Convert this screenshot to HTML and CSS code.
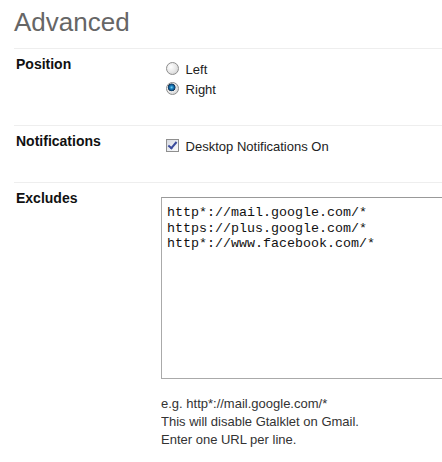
FILE: index.html
```html
<!DOCTYPE html>
<html lang="en">
<head>
<meta charset="UTF-8">
<title>Advanced</title>
<link rel="stylesheet" href="styles.css">
</head>
<body>

<div class="page">
  <h1 class="title">Advanced</h1>

  <div class="row">
    <div class="row-label">Position</div>
    <div class="row-content">
      <label class="option"><input type="radio" name="position" class="radio"> Left</label>
      <label class="option"><input type="radio" name="position" class="radio" checked> Right</label>
    </div>
  </div>

  <div class="row">
    <div class="row-label">Notifications</div>
    <div class="row-content">
      <label class="option"><input type="checkbox" class="check" checked> Desktop Notifications On</label>
    </div>
  </div>

  <div class="row">
    <div class="row-label">Excludes</div>
    <div class="row-content">
      <textarea class="excludes" spellcheck="false">http*://mail.google.com/*
https://plus.google.com/*
http*://www.facebook.com/*</textarea>
      <div class="hint">
        e.g. http*://mail.google.com/*<br>
        This will disable Gtalklet on Gmail.<br>
        Enter one URL per line.
      </div>
    </div>
  </div>
</div>

</body>
</html>
```

FILE: styles.css
```css
html {
  overflow: hidden;
}
body {
  margin: 0;
  background: #fff;
  color: #222;
  font-family: "Liberation Sans", Arial, sans-serif;
  font-size: 13px;
}
.page {
  padding: 7px 0 0 14px;
}
.title {
  margin: 0 0 11px;
  font-size: 26px;
  line-height: 30px;
  font-weight: normal;
  color: #666;
}
.row {
  display: flex;
  border-top: 1px solid #eee;
  padding: 6px 0 25px;
}
.row-label {
  width: 145px;
  padding-left: 2px;
  flex: none;
  font-size: 14px;
  font-weight: bold;
  line-height: 18px;
  color: #111;
}
.row-content {
  flex: 1;
  min-width: 0;
  overflow: hidden;
  margin-top: 5px;
}
.option {
  display: block;
  line-height: 20px;
  white-space: nowrap;
}
.radio,
.check {
  appearance: none;
  -webkit-appearance: none;
  width: 13px;
  height: 13px;
  margin: 0 3px 0 5px;
  vertical-align: -1px;
  box-sizing: border-box;
}
.radio {
  border-radius: 50%;
  border: 1px solid #8d8d8d;
  background: radial-gradient(circle at 35% 35%, #fff 0, #e8e8e8 50%, #c9c9c9 100%);
}
.radio:checked {
  background:
    radial-gradient(circle at 42% 40%, #7ad4f2 0, #1f86c4 1.5px, #0c4b80 3px, #1d3650 3.6px, transparent 4.2px),
    radial-gradient(circle at 35% 35%, #fff 0, #e8e8e8 50%, #c9c9c9 100%);
}
.check {
  position: relative;
  border: 1px solid #8f8f8f;
  background: linear-gradient(135deg, #d6d9e0 0, #eef0f4 60%, #fbfbfb 100%);
}
.check:checked::after {
  content: "";
  position: absolute;
  left: 3px;
  top: 0;
  width: 3px;
  height: 7px;
  border: solid #3a4b9c;
  border-width: 0 2px 2px 0;
  transform: rotate(40deg);
}
.excludes {
  display: block;
  width: 320px;
  height: 182px;
  margin: 3px 0 0;
  box-sizing: border-box;
  padding: 7px 5px 4px;
  border: 1px solid #aaa;
  border-top-color: #999;
  font-family: "Liberation Mono", "Courier New", monospace;
  font-size: 13.33px;
  line-height: 15.5px;
  color: #111;
  resize: none;
  outline: none;
}
.hint {
  margin-top: 16px;
  line-height: 18px;
  color: #333;
}
```
